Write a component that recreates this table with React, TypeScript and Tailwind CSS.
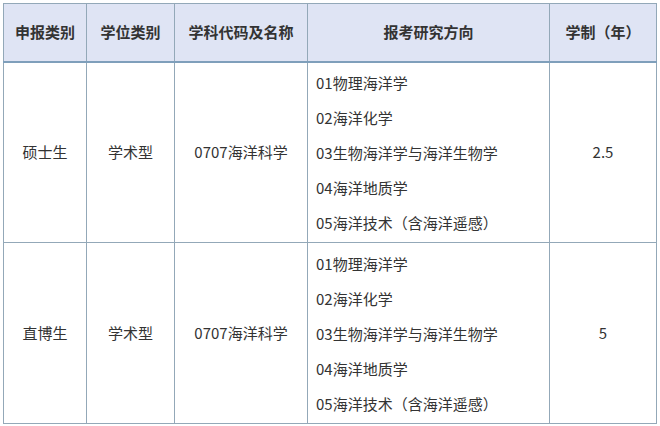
const headers = ['申报类别', '学位类别', '学科代码及名称', '报考研究方向', '学制（年）'];

const directions = [
  '01物理海洋学',
  '02海洋化学',
  '03生物海洋学与海洋生物学',
  '04海洋地质学',
  '05海洋技术（含海洋遥感）',
];

const rows = [
  { type: '硕士生', degree: '学术型', subject: '0707海洋科学', years: '2.5' },
  { type: '直博生', degree: '学术型', subject: '0707海洋科学', years: '5' },
];

export default function App() {
  return (
    <div className="w-[660px] h-[426px] bg-white pt-[3px] pl-[3px] font-['Noto_Sans_CJK_SC','Noto_Sans',sans-serif] text-[#333]">
      <table className="table-fixed border-collapse w-[653px] text-[15px]">
        <colgroup>
          <col className="w-[83px]" />
          <col className="w-[88px]" />
          <col className="w-[133px]" />
          <col className="w-[242px]" />
          <col className="w-[107px]" />
        </colgroup>
        <thead>
          <tr className="h-[58px] bg-[#dfe4f4]">
            {headers.map((h) => (
              <th
                key={h}
                className="border border-[#93a8b8] border-b-2 border-b-[#7f9fbb] font-bold text-center align-middle"
              >
                {h}
              </th>
            ))}
          </tr>
        </thead>
        <tbody>
          {rows.map((r) => (
            <tr key={r.type} className="h-[181px]">
              <td className="border border-[#93a8b8] text-center align-middle">{r.type}</td>
              <td className="border border-[#93a8b8] text-center align-middle">{r.degree}</td>
              <td className="border border-[#93a8b8] text-center align-middle">{r.subject}</td>
              <td className="border border-[#93a8b8] pl-[8px] align-middle">
                {directions.map((d) => (
                  <div key={d} className="leading-[35px]">
                    {d}
                  </div>
                ))}
              </td>
              <td className="border border-[#93a8b8] text-center align-middle">{r.years}</td>
            </tr>
          ))}
        </tbody>
      </table>
    </div>
  );
}
